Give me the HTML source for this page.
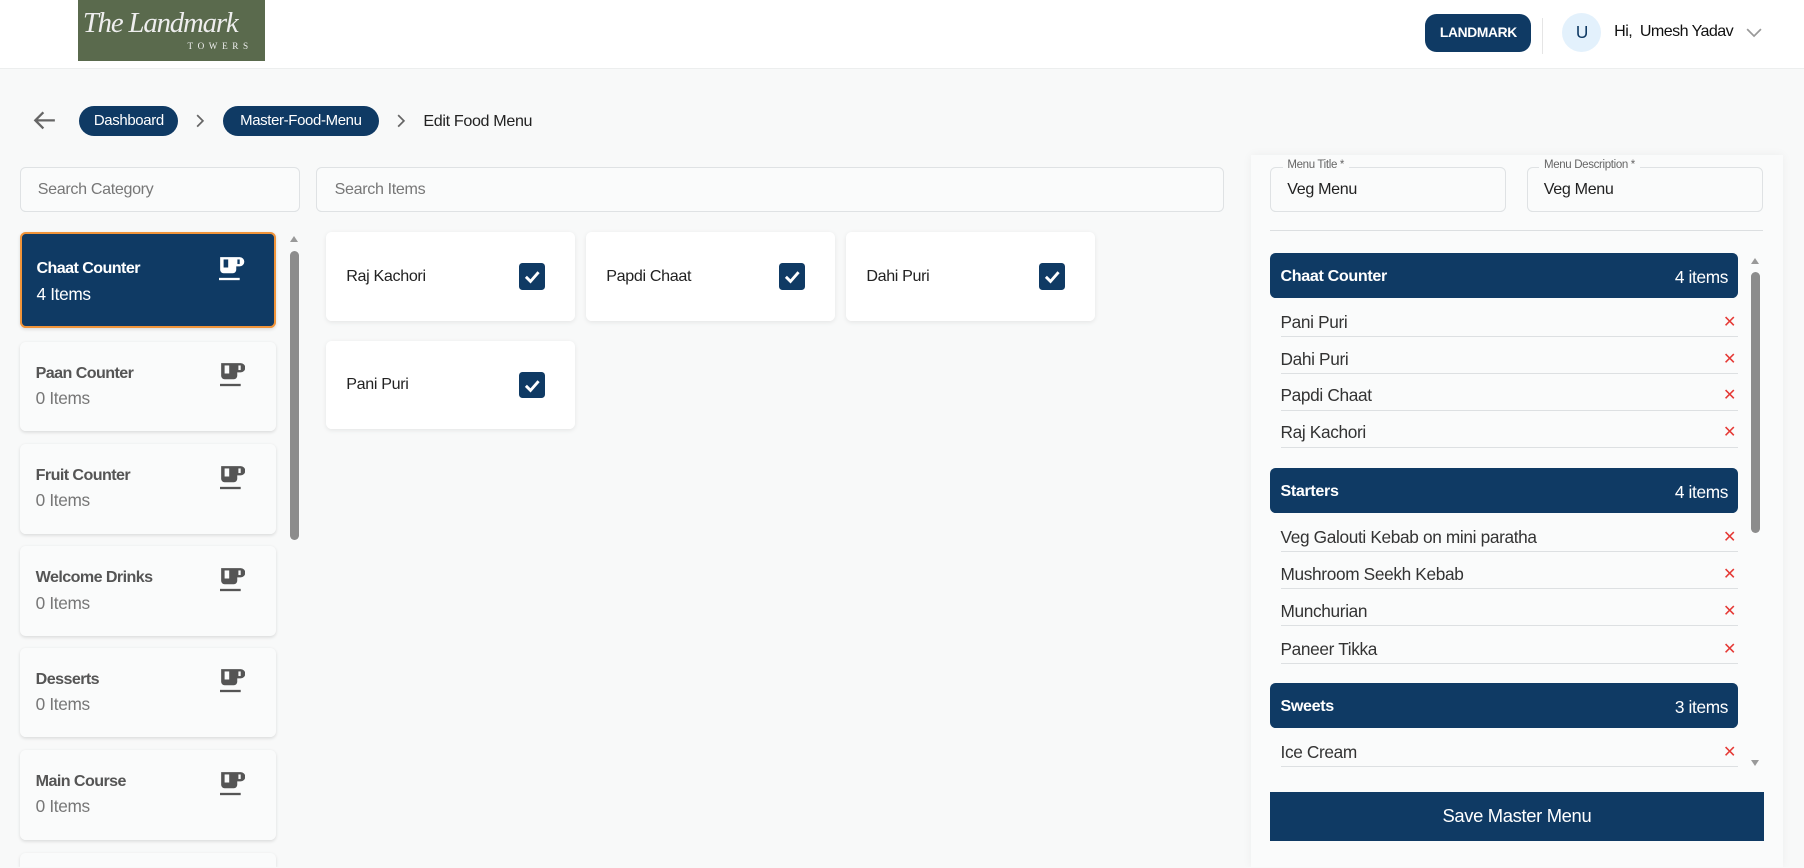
<!DOCTYPE html>
<html><head><meta charset="utf-8"><style>
*{box-sizing:border-box;margin:0;padding:0}
html,body{width:1804px;height:868px;overflow:hidden;background:#f8f9f9}
#root{zoom:1.1505;width:1568px;height:754px;position:relative;font-family:"Liberation Sans",sans-serif;color:#222;overflow:hidden;letter-spacing:-0.3px}
.a{position:absolute}
.hdr{left:0;top:0;width:1568px;height:60px;background:#fff;border-bottom:1px solid #eceeee}
.pill{background:#0f3a64;color:#fff;border-radius:14px;font-size:13px;display:flex;align-items:center;justify-content:center}
.inp{background:#fafbfb;border:1px solid #dfe2e4;border-radius:5px;font-size:14px;color:#777;padding-left:15px;display:flex;align-items:center}
.cat{left:17px;width:223px;height:78px;background:#fafbfb;border-radius:5px;box-shadow:0 1px 3px rgba(0,0,0,.12)}
.cat b{position:absolute;left:14px;top:19px;font-size:14px;color:#555;letter-spacing:-.5px}
.cat span{position:absolute;left:14px;top:40px;font-size:15px;color:#777}
.cat svg{position:absolute;left:174px;top:18px}
.item{width:217px;height:77px;background:#fff;border-radius:5px;box-shadow:0 1px 4px rgba(0,0,0,.08)}
.item span{position:absolute;left:18px;top:30px;font-size:14px;color:#222}
.cb{position:absolute;left:168px;top:27px;width:23px;height:23px;background:#0f3a64;border-radius:3px}
.gh{left:1104px;width:407px;height:39px;background:#0f3a64;border-radius:5px;color:#fff;font-size:15px}
.gh b{position:absolute;left:9px;top:12px;font-size:14px}
.gh span{position:absolute;right:9px;top:12px}
.row{left:1113px;width:398px;height:32px;border-bottom:1px solid #dde0e2;font-size:15px;color:#333}
.row span{position:absolute;left:0;top:10px}
.row i{position:absolute;right:2px;top:10px;color:#e53935;font-style:normal;font-size:14px}
</style></head><body><div id="root">
<div class="a hdr"></div>
<div class="a" style="left:68px;top:0;width:162px;height:53px;background:#5a6a4d;color:#eee;font-family:'Liberation Serif',serif;font-style:italic">
 <div class="a" style="left:4px;top:6px;font-size:25px;white-space:nowrap;letter-spacing:-1px">The Landmark</div>
 <div class="a" style="left:95px;top:36px;font-size:8px;font-style:normal;letter-spacing:4px">TOWERS</div>
</div>
<div class="a pill" style="left:1239px;top:12px;width:92px;height:33px;border-radius:10px;font-weight:bold;font-size:12px">LANDMARK</div>
<div class="a" style="left:1340px;top:16px;width:1px;height:31px;background:#e5e5e5"></div>
<div class="a" style="left:1358px;top:11px;width:34px;height:34px;border-radius:50%;background:#e3f1fc;color:#0f3a64;font-size:15px;text-align:center;line-height:34px">U</div>
<div class="a" style="left:1403px;top:19px;font-size:14px;color:#111;letter-spacing:-0.5px">Hi,&nbsp; Umesh Yadav</div>
<svg class="a" style="left:1518px;top:24px" width="14" height="9"><path d="M1 1l6 6 6-6" fill="none" stroke="#999" stroke-width="1.5"/></svg>

<svg class="a" style="left:29px;top:96px" width="20" height="18"><path d="M19 9H2M9 2L2 9l7 7" fill="none" stroke="#666" stroke-width="2"/></svg>
<div class="a pill" style="left:69px;top:92px;width:86px;height:26px">Dashboard</div>
<svg class="a" style="left:170px;top:99px" width="8" height="12"><path d="M1 1l5 5-5 5" fill="none" stroke="#666" stroke-width="1.5"/></svg>
<div class="a pill" style="left:194px;top:92px;width:135px;height:26px">Master-Food-Menu</div>
<svg class="a" style="left:345px;top:99px" width="8" height="12"><path d="M1 1l5 5-5 5" fill="none" stroke="#666" stroke-width="1.5"/></svg>
<div class="a" style="left:368px;top:97px;font-size:14px;color:#222">Edit Food Menu</div>

<div class="a inp" style="left:17px;top:145px;width:244px;height:39px">Search Category</div>
<div class="a inp" style="left:275px;top:145px;width:789px;height:39px">Search Items</div>

<div class="a cat" style="top:202px;height:83px;background:#0f3a64;border:2px solid #f0943a"><b style="color:#fff;left:13px;top:21px">Chaat Counter</b><span style="color:#fff;left:13px;top:43px">4 Items</span><svg style="left:172px;top:19px" width="22" height="24" viewBox="0 0 22 24"><path d="M1 1h14v11a3 3 0 0 1-3 3H4a3 3 0 0 1-3-3z M15 1h3a3 3 0 0 1 0 8h-3" fill="#fff"/><rect x="4" y="3" width="4" height="7" fill="#0f3a64"/><rect x="16" y="3" width="2" height="4" fill="#0f3a64"/><rect x="0" y="19" width="18" height="2" fill="#fff"/></svg></div>
<div class="a cat" style="top:297px"><b>Paan Counter</b><span>0 Items</span><svg width="22" height="24" viewBox="0 0 22 24"><path d="M1 1h14v11a3 3 0 0 1-3 3H4a3 3 0 0 1-3-3z M15 1h3a3 3 0 0 1 0 8h-3" fill="#555"/><rect x="4" y="3" width="4" height="7" fill="#fafbfb"/><rect x="16" y="3" width="2" height="4" fill="#fafbfb"/><rect x="0" y="19" width="18" height="2" fill="#555"/></svg></div>
<div class="a cat" style="top:386px"><b>Fruit Counter</b><span>0 Items</span><svg width="22" height="24" viewBox="0 0 22 24"><path d="M1 1h14v11a3 3 0 0 1-3 3H4a3 3 0 0 1-3-3z M15 1h3a3 3 0 0 1 0 8h-3" fill="#555"/><rect x="4" y="3" width="4" height="7" fill="#fafbfb"/><rect x="16" y="3" width="2" height="4" fill="#fafbfb"/><rect x="0" y="19" width="18" height="2" fill="#555"/></svg></div>
<div class="a cat" style="top:475px"><b>Welcome Drinks</b><span>0 Items</span><svg width="22" height="24" viewBox="0 0 22 24"><path d="M1 1h14v11a3 3 0 0 1-3 3H4a3 3 0 0 1-3-3z M15 1h3a3 3 0 0 1 0 8h-3" fill="#555"/><rect x="4" y="3" width="4" height="7" fill="#fafbfb"/><rect x="16" y="3" width="2" height="4" fill="#fafbfb"/><rect x="0" y="19" width="18" height="2" fill="#555"/></svg></div>
<div class="a cat" style="top:563px"><b>Desserts</b><span>0 Items</span><svg width="22" height="24" viewBox="0 0 22 24"><path d="M1 1h14v11a3 3 0 0 1-3 3H4a3 3 0 0 1-3-3z M15 1h3a3 3 0 0 1 0 8h-3" fill="#555"/><rect x="4" y="3" width="4" height="7" fill="#fafbfb"/><rect x="16" y="3" width="2" height="4" fill="#fafbfb"/><rect x="0" y="19" width="18" height="2" fill="#555"/></svg></div>
<div class="a cat" style="top:652px"><b>Main Course</b><span>0 Items</span><svg width="22" height="24" viewBox="0 0 22 24"><path d="M1 1h14v11a3 3 0 0 1-3 3H4a3 3 0 0 1-3-3z M15 1h3a3 3 0 0 1 0 8h-3" fill="#555"/><rect x="4" y="3" width="4" height="7" fill="#fafbfb"/><rect x="16" y="3" width="2" height="4" fill="#fafbfb"/><rect x="0" y="19" width="18" height="2" fill="#555"/></svg></div>
<div class="a cat" style="top:741px;height:13px;border-radius:5px 5px 0 0"></div>
<div class="a" style="left:252px;top:205px;width:0;height:0;border-left:4px solid transparent;border-right:4px solid transparent;border-bottom:6px solid #999"></div>
<div class="a" style="left:252px;top:218px;width:8px;height:251px;border-radius:4px;background:#8c8c8c"></div>

<div class="a item" style="left:283px;top:202px"><span>Raj Kachori</span><div class="cb"><svg width="23" height="23"><path d="M6 12l4 4 7-8" fill="none" stroke="#fff" stroke-width="2.5"/></svg></div></div>
<div class="a item" style="left:509px;top:202px"><span>Papdi Chaat</span><div class="cb"><svg width="23" height="23"><path d="M6 12l4 4 7-8" fill="none" stroke="#fff" stroke-width="2.5"/></svg></div></div>
<div class="a item" style="left:735px;top:202px"><span>Dahi Puri</span><div class="cb"><svg width="23" height="23"><path d="M6 12l4 4 7-8" fill="none" stroke="#fff" stroke-width="2.5"/></svg></div></div>
<div class="a item" style="left:283px;top:296px"><span>Pani Puri</span><div class="cb"><svg width="23" height="23"><path d="M6 12l4 4 7-8" fill="none" stroke="#fff" stroke-width="2.5"/></svg></div></div>

<div class="a" style="left:1087px;top:135px;width:463px;height:619px;background:#fafbfb;box-shadow:0 0 8px rgba(0,0,0,.05)"></div>
<div class="a inp" style="left:1104px;top:145px;width:205px;height:39px;color:#222;font-size:14px;padding-left:14px">Veg Menu</div>
<div class="a" style="left:1115px;top:138px;background:#fafbfb;padding:0 4px;font-size:10px;color:#666">Menu Title *</div>
<div class="a inp" style="left:1327px;top:145px;width:205px;height:39px;color:#222;font-size:14px;padding-left:14px">Veg Menu</div>
<div class="a" style="left:1338px;top:138px;background:#fafbfb;padding:0 4px;font-size:10px;color:#666">Menu Description *</div>
<div class="a" style="left:1104px;top:200px;width:428px;height:1px;background:#dcdfe1"></div>

<div class="a gh" style="top:220px"><b>Chaat Counter</b><span>4 items</span></div>
<div class="a row" style="top:261px"><span>Pani Puri</span><i>✕</i></div>
<div class="a row" style="top:293px"><span>Dahi Puri</span><i>✕</i></div>
<div class="a row" style="top:325px"><span>Papdi Chaat</span><i>✕</i></div>
<div class="a row" style="top:357px"><span>Raj Kachori</span><i>✕</i></div>
<div class="a gh" style="top:407px"><b>Starters</b><span>4 items</span></div>
<div class="a row" style="top:448px"><span>Veg Galouti Kebab on mini paratha</span><i>✕</i></div>
<div class="a row" style="top:480px"><span>Mushroom Seekh Kebab</span><i>✕</i></div>
<div class="a row" style="top:512px"><span>Munchurian</span><i>✕</i></div>
<div class="a row" style="top:545px"><span>Paneer Tikka</span><i>✕</i></div>
<div class="a gh" style="top:594px"><b>Sweets</b><span>3 items</span></div>
<div class="a row" style="top:635px"><span>Ice Cream</span><i>✕</i></div>
<div class="a" style="left:1522px;top:224px;width:0;height:0;border-left:4px solid transparent;border-right:4px solid transparent;border-bottom:6px solid #999"></div>
<div class="a" style="left:1522px;top:236px;width:8px;height:227px;border-radius:4px;background:#8c8c8c"></div>
<div class="a" style="left:1522px;top:661px;width:0;height:0;border-left:4px solid transparent;border-right:4px solid transparent;border-top:6px solid #999"></div>
<div class="a" style="left:1104px;top:688px;width:429px;height:43px;background:#0f3a64;color:#fff;font-size:16px;display:flex;align-items:center;justify-content:center">Save Master Menu</div>
</div></body></html>
